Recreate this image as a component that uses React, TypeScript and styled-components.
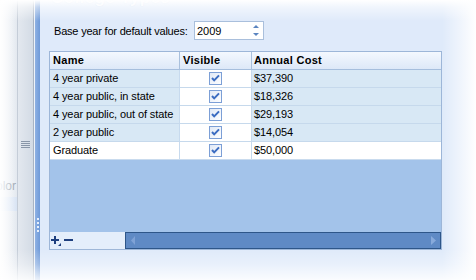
import React from 'react';
import styled, { createGlobalStyle } from 'styled-components';

const Global = createGlobalStyle`
  html, body { margin: 0; padding: 0; background: #fff; }
  body { font-family: "Liberation Sans", Arial, sans-serif; font-size: 11px; color: #000; }
  #root { width: 476px; height: 280px; overflow: hidden; }
`;

const Screen = styled.div`
  position: relative;
  width: 476px;
  height: 280px;
  overflow: hidden;
  display: flex;
  background: #fff;
`;

const SidePane = styled.div`
  width: 17px;
  flex: none;
  overflow: hidden;
  background: linear-gradient(to right, #f5f7fa, #e4e9f0);
  display: flex;
  flex-direction: column;
  padding-top: 180px;
  box-sizing: border-box;
`;

const SideLabel = styled.div`
  display: flex;
  justify-content: flex-end;
  height: 13px;
  line-height: 13px;
  color: #9aa3ae;
  white-space: nowrap;
  font-size: 12px;
  padding-right: 1px;
`;

const SideItem = styled.div`
  margin-top: 4px;
  height: 14px;
  background: linear-gradient(to right, #eef3fa, #d9e4f4);
`;

const Splitter = styled.div`
  width: 17px;
  flex: none;
  box-sizing: border-box;
  border-left: 1px solid #c5cdd8;
  border-right: 1px solid #a9b4c3;
  background: linear-gradient(to right, #e3e8ef, #d3dbe5);
  display: flex;
  justify-content: center;
  padding-top: 141px;
`;

const Grip = styled.div`
  width: 9px;
  height: 7px;
  background: repeating-linear-gradient(to bottom, #8996a8 0, #8996a8 1px, transparent 1px, transparent 2px);
`;

const BlueStrip = styled.div`
  width: 6px;
  flex: none;
  box-sizing: border-box;
  border-left: 1px solid #eef3fa;
  background: linear-gradient(to right, #8fb2e4, #6f9ad8);
  display: flex;
  justify-content: center;
  padding-top: 218px;
`;

const Dots = styled.div`
  width: 2px;
  height: 14px;
  background: repeating-linear-gradient(to bottom, #e8f0fb 0, #e8f0fb 2px, transparent 2px, transparent 4px);
`;

const MainPanel = styled.div`
  flex: 1;
  background: #dfeafa;
  padding-left: 9px;
  display: flex;
  flex-direction: column;
  align-items: flex-start;
`;

const Title = styled.div`
  margin-top: -10px;
  padding-left: 2px;
  height: 16px;
  line-height: 16px;
  font-size: 17px;
  font-weight: bold;
  color: #f3f7fd;
  letter-spacing: 0.4px;
  text-shadow: 0 0 1px #b9cde9, 0 0 1px #b9cde9;
`;

const BaseRow = styled.div`
  margin-top: 15px;
  padding-left: 5px;
  display: flex;
  align-items: center;
  height: 19px;
`;

const BaseLabel = styled.span`
  width: 140px;
  letter-spacing: -0.2px;
`;

const Spinner = styled.div`
  width: 70px;
  height: 19px;
  box-sizing: border-box;
  border: 1px solid #a9bfdc;
  background: #fff;
  display: flex;
  align-items: center;
  justify-content: space-between;
  padding: 0 4px 0 2px;
`;

const SpinValue = styled.span`
  font-size: 11px;
`;

const Grid = styled.div`
  margin-top: 11px;
  width: 393px;
  height: 199px;
  box-sizing: border-box;
  border: 1px solid #9db6d8;
  display: flex;
  flex-direction: column;
`;

const RowBase = styled.div`
  display: grid;
  grid-template-columns: 130px 72px 1fr;
  height: 18px;
  box-sizing: border-box;
`;

const HeaderRow = styled(RowBase)`
  background: linear-gradient(to bottom, #f4f8fe, #dde8f8);
  border-bottom: 1px solid #a6bedd;
`;

const HeaderCell = styled.div`
  border-right: 1px solid #a9c0dd;
  padding-left: 3px;
  font-weight: bold;
  letter-spacing: 0.3px;
  line-height: 17px;
  &:last-child { border-right: none; padding-left: 2px; }
`;

const DataRow = styled(RowBase)<{ $current?: boolean }>`
  border-bottom: 1px solid ${p => (p.$current ? '#c9dbee' : '#c6d9ec')};
  background: ${p => (p.$current ? '#ffffff' : '#d8e8f5')};
`;

const Cell = styled.div<{ $center?: boolean; $white?: boolean }>`
  border-right: 1px solid #c7daee;
  padding-left: ${p => (p.$center ? 0 : 3)}px;
  line-height: 17px;
  font-size: 11px;
  letter-spacing: -0.1px;
  white-space: nowrap;
  overflow: hidden;
  background: ${p => (p.$white ? '#fff' : 'transparent')};
  display: ${p => (p.$center ? 'flex' : 'block')};
  align-items: center;
  justify-content: center;
  &:last-child { border-right: none; padding-left: 2px; }
`;

const Empty = styled.div`
  flex: 1;
  background: #a3c3ea;
`;

const Footer = styled.div`
  height: 17px;
  display: flex;
`;

const Nav = styled.div`
  width: 74px;
  background: #e4eefb;
  display: flex;
  align-items: center;
  padding-left: 1px;
  gap: 3px;
`;

const ScrollBar = styled.div`
  flex: 1;
  box-sizing: border-box;
  border: 1px solid #2e5689;
  background: #5f8ac5;
  display: flex;
  align-items: center;
  justify-content: space-between;
  padding: 0 4px 0 5px;
`;

const Vignette = styled.div`
  position: absolute;
  inset: 0;
  pointer-events: none;
  background:
    linear-gradient(to bottom, rgba(255,255,255,1) 0px, rgba(255,255,255,0.55) 7px, rgba(255,255,255,0) 21px),
    linear-gradient(to top, rgba(255,255,255,0.85) 0px, rgba(255,255,255,0.3) 16px, rgba(255,255,255,0) 31px),
    linear-gradient(to right, rgba(255,255,255,0.95) 0px, rgba(255,255,255,0) 16px),
    linear-gradient(to left, rgba(255,255,255,1) 0px, rgba(255,255,255,0.5) 16px, rgba(255,255,255,0) 34px);
`;

const Check = () => (
  <svg width="13" height="13" viewBox="0 0 13 13">
    <defs>
      <linearGradient id="cb" x1="0" y1="0" x2="1" y2="1">
        <stop offset="0" stopColor="#dfe8f6" />
        <stop offset="1" stopColor="#ffffff" />
      </linearGradient>
    </defs>
    <rect x="0.5" y="0.5" width="12" height="12" fill="url(#cb)" stroke="#7c9fd6" />
    <path d="M3 6 L5.2 8.4 L10 3.4" fill="none" stroke="#3b6cc1" strokeWidth="2" />
  </svg>
);

const SpinArrows = () => (
  <svg width="6" height="13" viewBox="0 0 6 13">
    <path d="M0 4 L3 1 L6 4 Z" fill="#5a84c0" />
    <path d="M0 9 L3 12 L6 9 Z" fill="#5a84c0" />
  </svg>
);

const PlusIcon = () => (
  <svg width="10" height="10" viewBox="0 0 10 10">
    <rect x="0" y="3" width="8" height="2" fill="#1e3f7e" />
    <rect x="3" y="0" width="2" height="8" fill="#1e3f7e" />
    <path d="M10 7 L10 10 L7 10 Z" fill="#1e3f7e" />
  </svg>
);

const MinusIcon = () => (
  <svg width="9" height="10" viewBox="0 0 9 10">
    <rect x="0" y="3" width="9" height="2" fill="#1e3f7e" />
  </svg>
);

const ArrowLeft = () => (
  <svg width="4" height="9" viewBox="0 0 4 9">
    <path d="M4 0 L0 4.5 L4 9 Z" fill="#7fa2d6" />
  </svg>
);

const ArrowRight = () => (
  <svg width="5" height="9" viewBox="0 0 5 9">
    <path d="M0 0 L5 4.5 L0 9 Z" fill="#88aadb" />
  </svg>
);

const rows = [
  { name: '4 year private', cost: '$37,390' },
  { name: '4 year public, in state', cost: '$18,326' },
  { name: '4 year public, out of state', cost: '$29,193' },
  { name: '2 year public', cost: '$14,054' },
  { name: 'Graduate', cost: '$50,000', current: true },
];

export default function App() {
  return (
    <>
      <Global />
      <Screen>
        <SidePane>
          <SideLabel>Color</SideLabel>
          <SideItem />
        </SidePane>
        <Splitter>
          <Grip />
        </Splitter>
        <BlueStrip>
          <Dots />
        </BlueStrip>
        <MainPanel>
          <Title>College Types</Title>
          <BaseRow>
            <BaseLabel>Base year for default values:</BaseLabel>
            <Spinner>
              <SpinValue>2009</SpinValue>
              <SpinArrows />
            </Spinner>
          </BaseRow>
          <Grid>
            <HeaderRow>
              <HeaderCell>Name</HeaderCell>
              <HeaderCell>Visible</HeaderCell>
              <HeaderCell>Annual Cost</HeaderCell>
            </HeaderRow>
            {rows.map(r => (
              <DataRow key={r.name} $current={r.current}>
                <Cell>{r.name}</Cell>
                <Cell $center $white>
                  <Check />
                </Cell>
                <Cell>{r.cost}</Cell>
              </DataRow>
            ))}
            <Empty />
            <Footer>
              <Nav>
                <PlusIcon />
                <MinusIcon />
              </Nav>
              <ScrollBar>
                <ArrowLeft />
                <ArrowRight />
              </ScrollBar>
            </Footer>
          </Grid>
        </MainPanel>
        <Vignette />
      </Screen>
    </>
  );
}
